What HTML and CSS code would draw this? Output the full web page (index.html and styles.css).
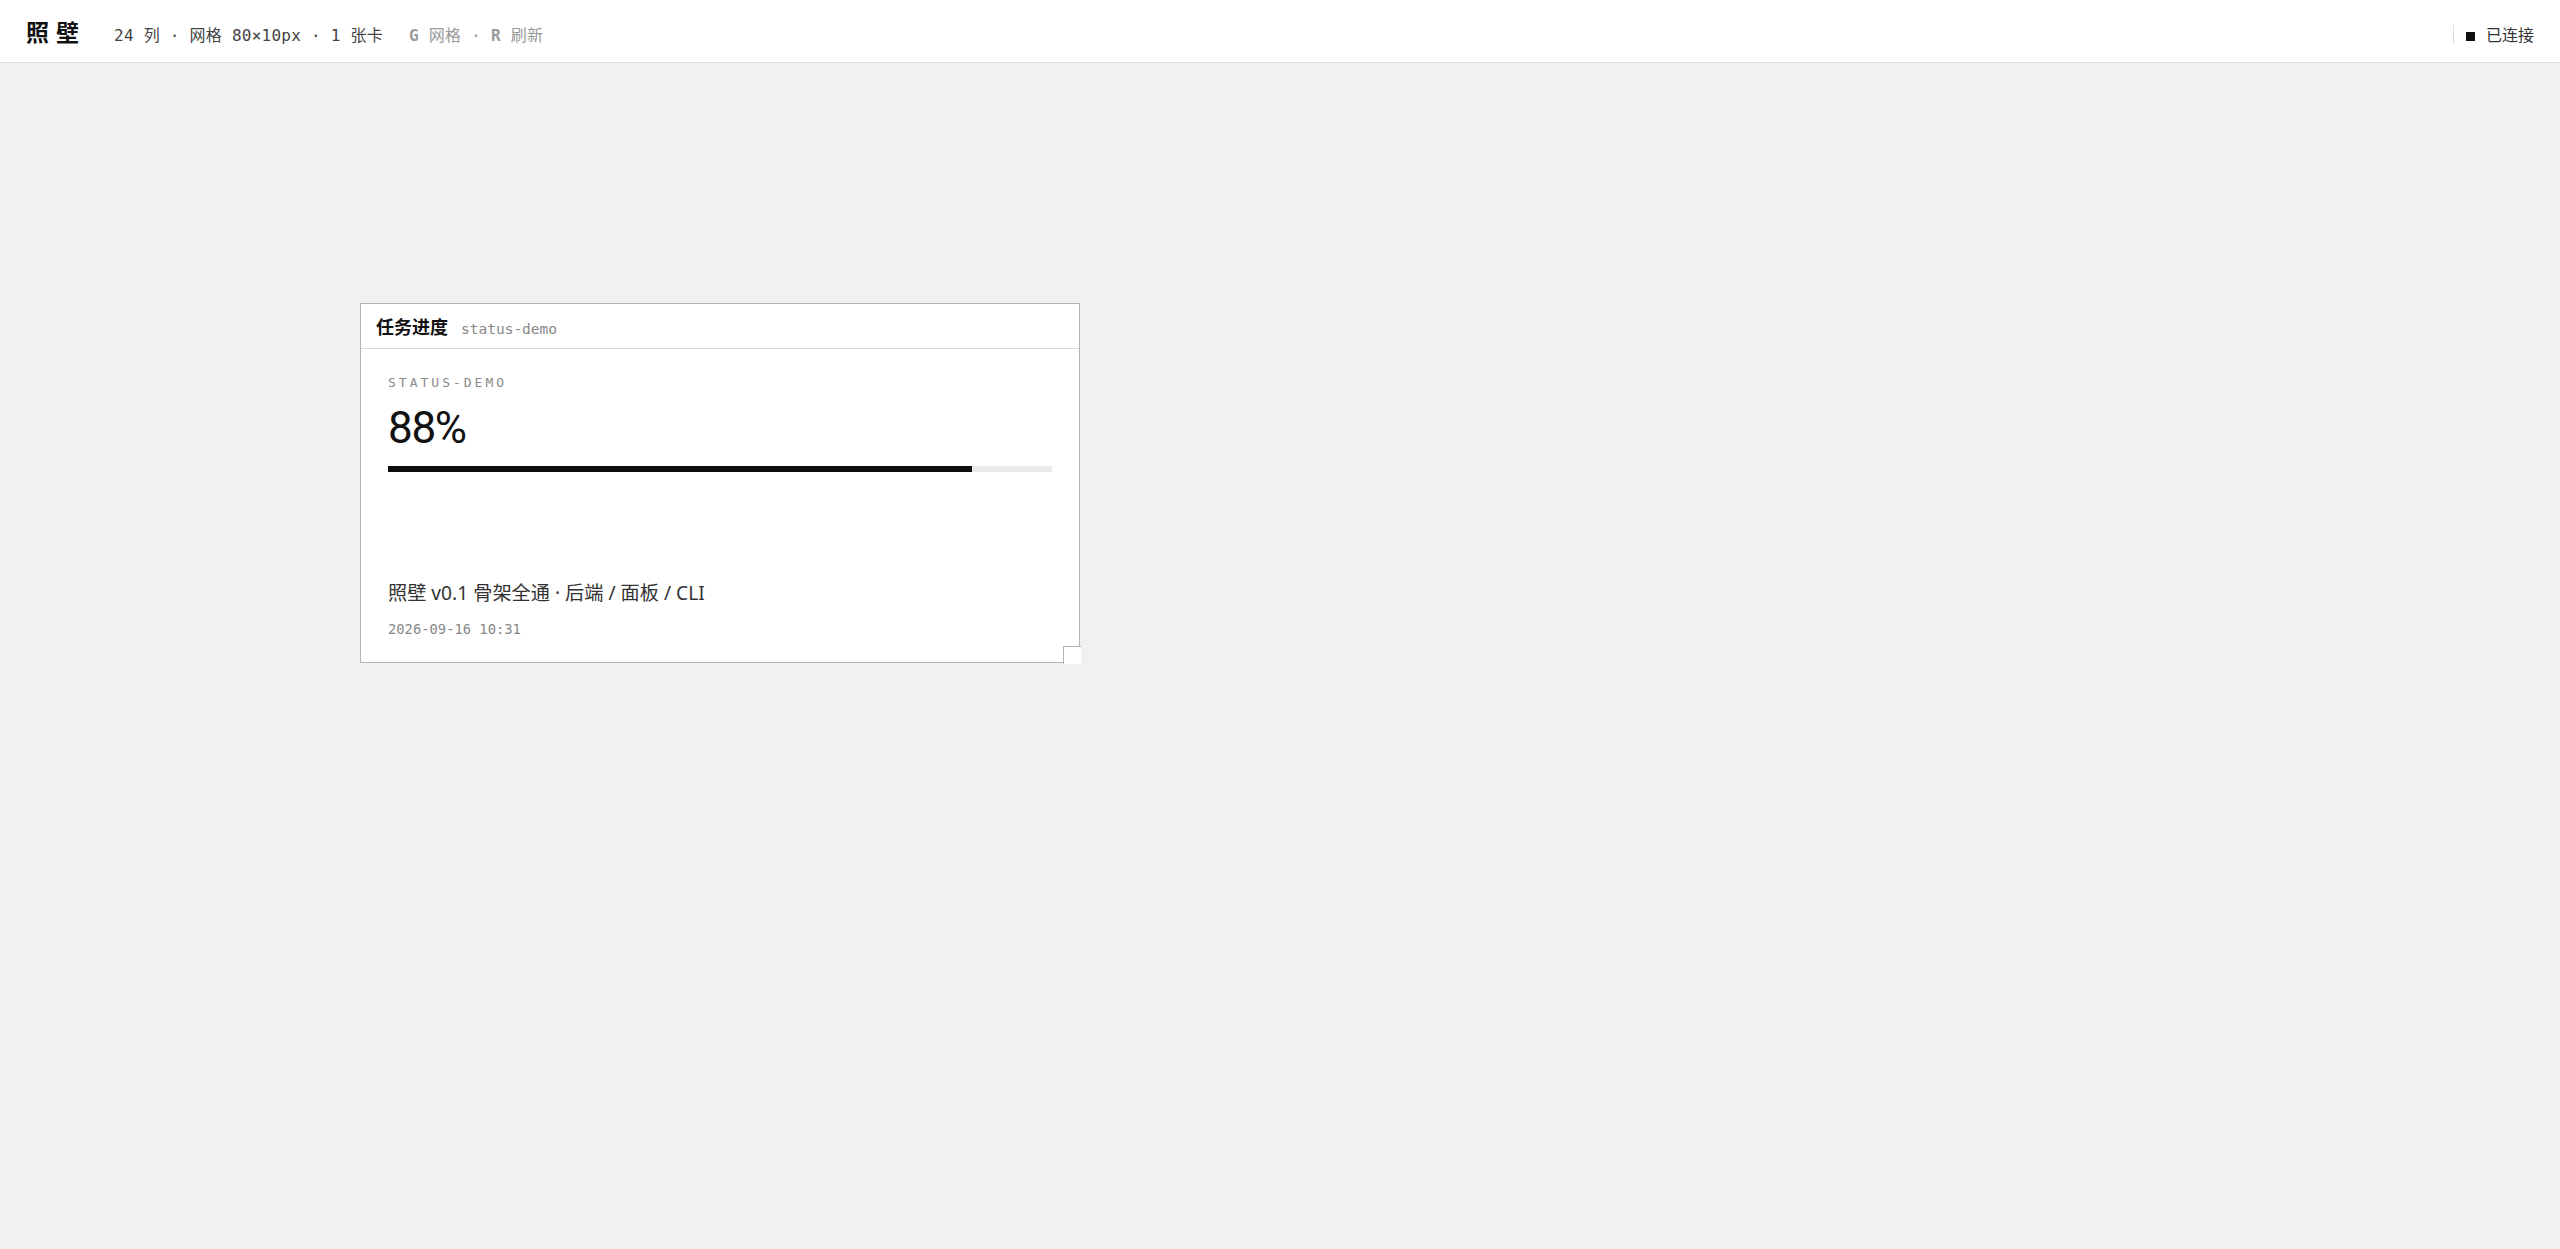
FILE: index.html
```html
<!DOCTYPE html>
<html lang="zh-CN">
<head>
<meta charset="utf-8">
<title>照壁</title>
<link rel="stylesheet" href="styles.css">
</head>
<body>
<div class="app">
  <header class="topbar">
    <div class="brand">照壁</div>
    <div class="meta">24 列 · 网格 80×10px · 1 张卡</div>
    <div class="hints"><span class="key">G</span> 网格 · <span class="key">R</span> 刷新</div>
    <div class="status"><span class="dot"></span>已连接</div>
  </header>
  <main class="canvas">
    <section class="card">
      <div class="card-head">
        <span class="card-title">任务进度</span>
        <span class="card-id">status-demo</span>
      </div>
      <div class="card-body">
        <div class="label">STATUS-DEMO</div>
        <div class="value">88%</div>
        <div class="bar"><div class="bar-fill" style="width: 88%"></div></div>
        <div class="foot">
          <div class="note">照壁 v0.1 骨架全通 · 后端 / 面板 / CLI</div>
          <div class="time">2026-09-16 10:31</div>
        </div>
      </div>
      <div class="resize"></div>
    </section>
  </main>
</div>
</body>
</html>
```

FILE: styles.css
```css
html, body {
  margin: 0;
  padding: 0;
  height: 100%;
}
body {
  font-family: "Noto Sans", "Noto Sans CJK SC", sans-serif;
  background: #f1f1f1;
  color: #222;
}
.app {
  display: flex;
  flex-direction: column;
  height: 100vh;
}
.topbar {
  height: 63px;
  box-sizing: border-box;
  background: #fff;
  border-bottom: 1px solid #e2e2e2;
  display: flex;
  align-items: baseline;
  padding: 19px 26px 0 26px;
  line-height: 24px;
  flex: none;
}
.brand {
  font-family: "Noto Sans CJK SC", sans-serif;
  font-size: 23px;
  font-weight: 700;
  letter-spacing: 7px;
  color: #111;
  margin-right: 28px;
}
.meta {
  font-family: "DejaVu Sans Mono", "Noto Sans CJK SC", monospace;
  font-size: 16px;
  letter-spacing: 0.25px;
  color: #444;
}
.hints {
  font-family: "DejaVu Sans Mono", "Noto Sans CJK SC", monospace;
  font-size: 16px;
  letter-spacing: 0.25px;
  color: #999;
  margin-left: 26px;
}
.key {
  font-weight: 700;
  color: #999;
}
.status {
  margin-left: auto;
  font-family: "Noto Sans CJK SC", sans-serif;
  font-size: 16px;
  line-height: 19px;
  color: #333;
  border-left: 1px solid #dcdcdc;
  padding-left: 12px;
}
.dot {
  display: inline-block;
  width: 9px;
  height: 9px;
  background: #111;
  margin-right: 11px;
}
.canvas {
  flex: 1;
  position: relative;
  background: #f1f1f1;
}
.card {
  position: absolute;
  left: 360px;
  top: 240px;
  width: 720px;
  height: 360px;
  box-sizing: border-box;
  background: #fff;
  border: 1px solid #b4b4b4;
  display: flex;
  flex-direction: column;
}
.card-head {
  height: 45px;
  box-sizing: border-box;
  border-bottom: 1px solid #dadada;
  display: flex;
  align-items: baseline;
  gap: 13px;
  padding: 0 15px;
  line-height: 44px;
  flex: none;
}
.card-title {
  font-family: "Noto Sans CJK SC", sans-serif;
  font-size: 18px;
  font-weight: 700;
  color: #111;
}
.card-id {
  font-family: "DejaVu Sans Mono", monospace;
  font-size: 14.5px;
  color: #888;
}
.card-body {
  flex: 1;
  display: flex;
  flex-direction: column;
  padding: 26px 27px 25px 27px;
}
.label {
  font-family: "DejaVu Sans Mono", monospace;
  font-size: 13px;
  letter-spacing: 3px;
  color: #8a8a8a;
}
.value {
  font-family: Roboto, "Noto Sans", sans-serif;
  font-size: 44px;
  line-height: 44px;
  letter-spacing: -0.03em;
  color: #111;
  margin-top: 16px;
}
.bar {
  height: 6px;
  background: #ebebeb;
  margin-top: 16px;
}
.bar-fill {
  height: 100%;
  background: #0d0d0d;
}
.foot {
  margin-top: auto;
}
.note {
  font-size: 19.2px;
  line-height: 30px;
  color: #333;
}
.time {
  font-family: "DejaVu Sans Mono", monospace;
  font-size: 13.8px;
  color: #888;
  margin-top: 13px;
}
.resize {
  position: absolute;
  right: -2px;
  bottom: -2px;
  width: 18px;
  height: 18px;
  box-sizing: border-box;
  background: #fff;
  border-top: 1px solid #b4b4b4;
  border-left: 1px solid #b4b4b4;
}
```
